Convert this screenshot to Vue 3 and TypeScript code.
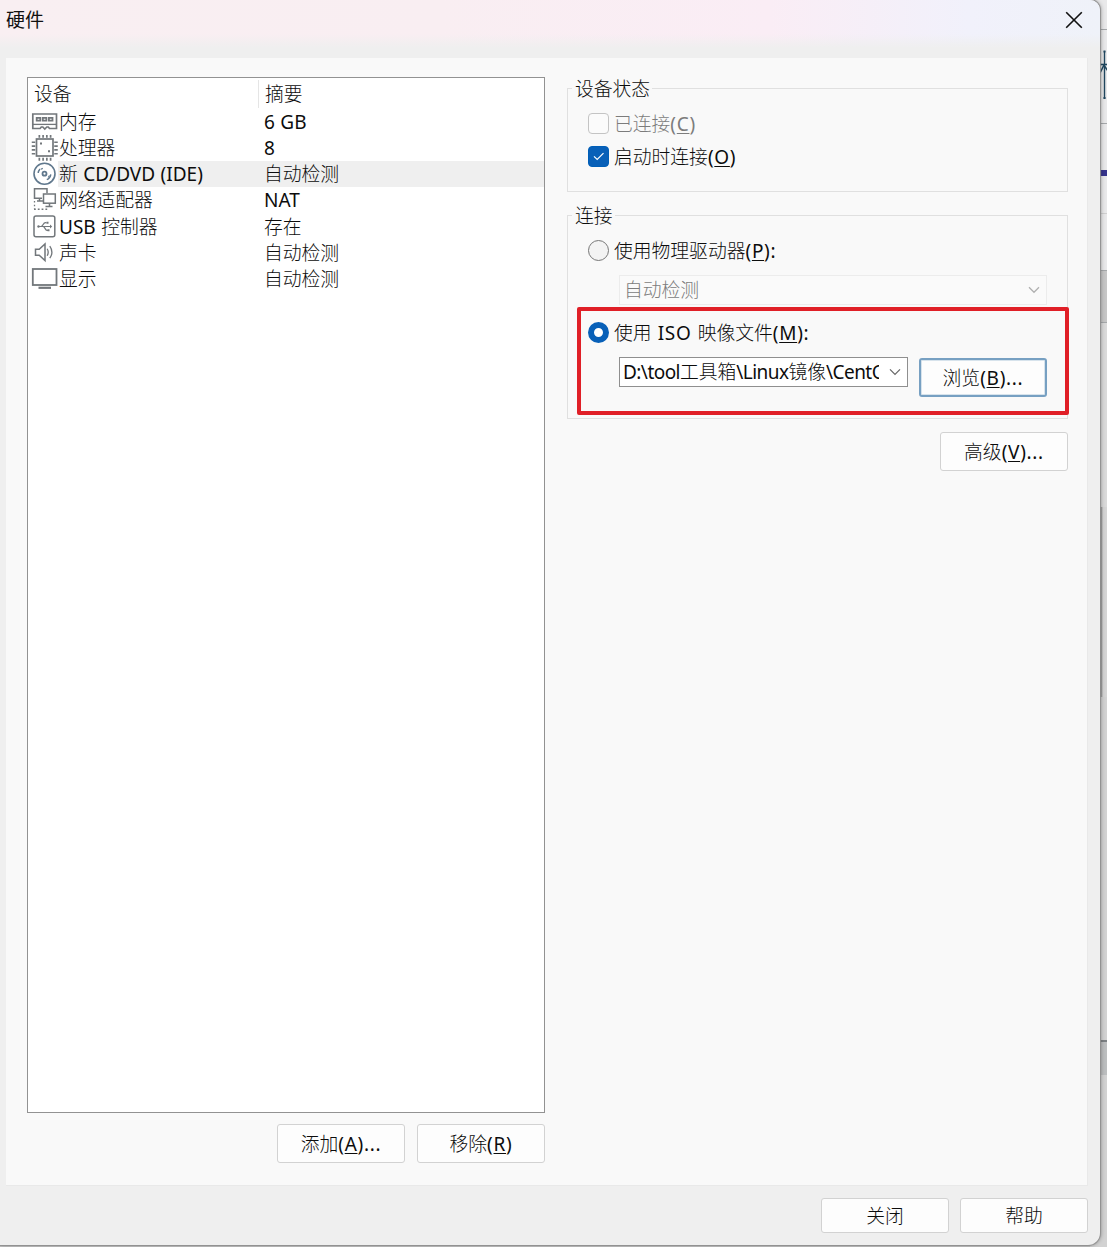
<script setup lang="ts">
import { ref, h, type FunctionalComponent } from 'vue'

interface Device {
  icon: string
  name: string
  summary: string
}

const devices: Device[] = [
  { icon: 'memory', name: '内存', summary: '6 GB' },
  { icon: 'cpu', name: '处理器', summary: '8' },
  { icon: 'disc', name: '新 CD/DVD (IDE)', summary: '自动检测' },
  { icon: 'network', name: '网络适配器', summary: 'NAT' },
  { icon: 'usb', name: 'USB 控制器', summary: '存在' },
  { icon: 'sound', name: '声卡', summary: '自动检测' },
  { icon: 'display', name: '显示', summary: '自动检测' },
]

const selected = ref(2)
const connectAtPowerOn = ref(true)
const source = ref<'physical' | 'iso'>('iso')

// Splits a label into Chinese and Latin runs; "&" marks the accelerator key.
const Label: FunctionalComponent<{ text: string }> = (props) =>
  h(
    'span',
    { class: ['label', { keyed: props.text.includes('&') }] },
    (props.text.match(/&.|[\u4e00-\u9fff]+|[^&\u4e00-\u9fff]+/g) ?? []).map((run) =>
      run[0] === '&'
        ? h('u', run[1])
        : h('span', { class: /[\u4e00-\u9fff]/.test(run) ? 'han' : 'latin' }, run),
    ),
  )
Label.props = ['text']
</script>

<template>
  <div class="desktop">
    <div class="backdrop">
      <i style="height: 29px" class="pale"></i>
      <i style="height: 94px" class="pale line"></i>
      <i style="height: 47px" class="pale line"></i>
      <i style="height: 6px" class="violet"></i>
      <i style="height: 37px" class="pale"></i>
      <i style="height: 57px" class="pale line soft"></i>
      <i style="height: 52px" class="dark line"></i>
      <i style="height: 185px" class="mid line"></i>
      <i style="height: 190px" class="mid edge"></i>
      <i style="height: 343px" class="low"></i>
      <i style="height: 35px" class="thumb"></i>
      <i class="low rest"></i>
      <svg class="mark" width="8" height="50" viewBox="0 0 8 50" fill="none" stroke="#20475f">
        <path d="M4.5 1v48" stroke-width="1.4" />
        <path d="M0 14.5h8" stroke-width="1.6" />
        <path d="M4 15 0 23M4.5 16l3.5 5" stroke-width="1.6" />
        <path d="M3.5 1.500h2M3.500 48h2" stroke-width="2" />
      </svg>
    </div>

    <div class="window">
      <header class="titlebar">
        <span>硬件</span>
        <svg class="close" width="18" height="18" viewBox="0 0 18 18" fill="none" stroke="#111" stroke-width="1.6">
          <path d="M1.200 1.200 16.800 16.800M16.800 1.200 1.200 16.800" />
        </svg>
      </header>

      <main class="panel">
        <section class="left">
          <div class="table">
            <div class="row head">
              <div class="c1"><Label text="设备" /></div>
              <div class="c2"><Label text="摘要" /></div>
            </div>
            <div
              v-for="(d, i) in devices"
              :key="d.icon"
              class="row"
              :class="{ selected: i === selected }"
              @click="selected = i"
            >
              <div class="icon">
                <svg width="28" height="28" viewBox="0 0 28 28" fill="none" stroke="#72777b" stroke-width="1.5">
                  <g v-if="d.icon === 'memory'" transform="translate(0 -.8)">
                    <path d="M1.800 5.800h23.700v14.500h-7l-1.200-1.500h-1.500l-2 2-2-2h-1.500l-1.200 1.500h-7.300z" stroke-width="1.700" />
                    <path d="M2 16.200h23.500" stroke-width="1.3" />
                    <path d="M5.700 9.700h3.600v2.800h-3.600zM11.800 9.700h3.600v2.800h-3.600zM17.900 9.700h3.600v2.800h-3.600z" stroke-width="1.8" />
                  </g>
                  <g v-else-if="d.icon === 'cpu'" transform="translate(0 -1)">
                    <rect x="5.500" y="5" width="16.500" height="17" stroke-width="1.7" />
                    <path d="M7.500 2.200h13M7.500 25.200h13" stroke-width="3" stroke-dasharray="1.7 2.050" />
                    <path d="M2.500 7.500v13M25 7.500v13" stroke-width="3.500" stroke-dasharray="1.600 2.200" />
                    <path d="M9 9.500h2M17 17.300h2" stroke-width="2" />
                  </g>
                  <template v-else-if="d.icon === 'disc'">
                    <g stroke="#60788d">
                      <circle cx="13.500" cy="12.700" r="10.500" stroke-width="1.600" />
                      <circle cx="13.500" cy="12.700" r="2" stroke-width="1.800" />
                      <path d="M7.200 12a6.500 6.500 0 0 1 1.800-4M19.800 13.400a6.500 6.500 0 0 1-4 5.300" stroke-width="1.400" />
                      <path d="M9.800 8.200l2-.8M17.200 16.500l1.300-2" stroke-width="1.200" />
                    </g>
                  </template>
                  <template v-else-if="d.icon === 'network'">
                    <path d="M11 11.300h-7.500v-9.500h12.500v4.500" />
                    <rect x="12.500" y="7" width="11.800" height="9.200" />
                    <path d="M8.500 11.500v2.500M6 14h6M18.500 16.500v3M14.500 19.500h7" />
                    <path d="M3.500 14v8" stroke-dasharray="1.500 2.200" stroke-width="1.300" />
                    <path d="M3 22.300h15" stroke-dasharray="1.800 2" stroke-width="1.600" />
                  </template>
                  <template v-else-if="d.icon === 'usb'">
                    <rect x="3" y="2" width="20.800" height="20.800" rx="2" />
                    <path d="M7 12.500h13M10 12.500c2 0 2-3.800 4.500-3.800h1M12 12.500c2 0 2 3.800 4 3.800h1" stroke-width="1.200" />
                    <circle cx="7.500" cy="12.500" r="1.200" fill="#72777b" stroke="none" />
                    <path d="M15.500 8.700h2M16.500 16.300h2" stroke-width="2" />
                    <path d="m19 10.500 2.200 2-2.200 2z" fill="#72777b" stroke="none" />
                  </template>
                  <g v-else-if="d.icon === 'sound'" transform="translate(0 -.6)">
                    <path d="M4.500 9.800h3.700l5.800-5.200v16.500l-5.800-5.300h-3.700z" />
                    <path d="M16.200 9.300q2 3.500 0 7M18.800 6.800q4.200 6 0 12" stroke-width="1.300" />
                  </g>
                  <g v-else transform="translate(0 .8)">
                    <rect x="1.800" y="2.200" width="23.700" height="16" stroke-width="1.800" />
                    <path d="M7.500 21h12.500" stroke-width="2.200" />
                  </g>
                </svg>
              </div>
              <div class="name"><Label :text="d.name" /></div>
              <div class="c2"><Label :text="d.summary" /></div>
            </div>
          </div>
          <div class="actions">
            <button class="btn"><Label text="添加(&A)..." /></button>
            <button class="btn"><Label text="移除(&R)" /></button>
          </div>
        </section>

        <section class="right">
          <div class="group status">
            <div class="legend"><Label text="设备状态" /></div>
            <div class="option disabled">
              <span class="check"></span>
              <Label text="已连接(&C)" />
            </div>
            <div class="option" @click="connectAtPowerOn = !connectAtPowerOn">
              <span class="check" :class="{ on: connectAtPowerOn }">
                <svg v-if="connectAtPowerOn" width="12" height="9" viewBox="0 0 12 9" fill="none" stroke="#fff" stroke-width="1.200">
                  <path d="m1 4.300 3.200 3.200 6.300-6.300" />
                </svg>
              </span>
              <Label text="启动时连接(&O)" />
            </div>
          </div>

          <div class="group connection">
            <div class="legend"><Label text="连接" /></div>
            <div class="option physical" @click="source = 'physical'">
              <span class="radio" :class="{ on: source === 'physical' }"></span>
              <Label text="使用物理驱动器(&P):" />
            </div>
            <div class="combo off">
              <Label text="自动检测" />
              <svg width="12" height="8" viewBox="0 0 12 8" fill="none" stroke="#b0b0b0" stroke-width="1.300">
                <path d="m1 1.300 5 5 5-5" />
              </svg>
            </div>
            <div class="option iso" @click="source = 'iso'">
              <span class="radio" :class="{ on: source === 'iso' }"></span>
              <Label text="使用 ISO 映像文件(&M):" />
            </div>
            <div class="file">
              <div class="combo">
                <div class="path"><Label text="D:\tool工具箱\Linux镜像\CentOS" /></div>
                <svg width="12" height="8" viewBox="0 0 12 8" fill="none" stroke="#666" stroke-width="1.200">
                  <path d="m1 1.300 5 5 5-5" />
                </svg>
              </div>
              <button class="btn focus"><Label text="浏览(&B)..." /></button>
            </div>
            <div class="highlight"></div>
          </div>

          <button class="btn advanced"><Label text="高级(&V)..." /></button>
        </section>
      </main>

      <footer class="footer">
        <button class="btn"><Label text="关闭" /></button>
        <button class="btn"><Label text="帮助" /></button>
      </footer>
    </div>
  </div>
</template>

<style>
body {
  background: #d2d2d2;
  overflow: hidden;
}
.label {
  white-space: pre;
  word-spacing: 0.5px;
}
.label .han {
  font-family: 'Noto Sans CJK SC', sans-serif;
  font-weight: 300;
  font-size: 18.8px;
  line-height: 0;
}
.label.keyed {
  letter-spacing: 0.7px;
}
.label.keyed .han {
  letter-spacing: 0;
}
.label u {
  text-decoration-thickness: 1px;
  text-underline-offset: 2px;
}
.path .latin {
  letter-spacing: -0.55px;
}
</style>

<style scoped>
* {
  box-sizing: border-box;
}
.desktop {
  position: relative;
  width: 1107px;
  height: 1247px;
  overflow: hidden;
  background: #c4c4c4;
  color: #0c0c0c;
  font-family: 'Noto Sans', 'Noto Sans CJK SC', sans-serif;
  font-size: 19px;
  line-height: 26px;
}
.backdrop {
  position: absolute;
  top: 0;
  right: 0;
  width: 17px;
  height: 1247px;
  display: flex;
  flex-direction: column;
}
.backdrop i {
  display: block;
  flex: none;
}
.backdrop .pale { background: #e9e9ea; }
.backdrop .line { border-top: 1px solid #a5a8aa; }
.backdrop .soft { border-top-color: #d0d0d0; }
.backdrop .violet { background: #36348c; }
.backdrop .dark { background: #c6c6c6; }
.backdrop .mid { background: #dadada; }
.backdrop .edge { background: linear-gradient(90deg, #8f8f8f 11px, #d5d5d5 13px); }
.backdrop .low { background: #d2d2d2; }
.backdrop .thumb { background: #bcbebf; border-top: 2px solid #7d8184; }
.backdrop .rest { flex: 1; }
.mark {
  position: absolute;
  right: -1px;
  top: 50px;
}
.window {
  position: relative;
  display: flex;
  flex-direction: column;
  width: 1100px;
  height: 1245px;
  background: #efefef;
  border-radius: 0 10px 12px 0;
  box-shadow: 0 0 1px 1px #909090, 1px 0 4px rgba(0, 0, 0, 0.3);
}
.titlebar {
  display: flex;
  justify-content: space-between;
  align-items: flex-start;
  height: 58px;
  padding: 6px 17px 0 6px;
  border-radius: 0 10px 0 0;
  background:
    linear-gradient(180deg, rgba(239, 239, 239, 0) 34px, #efefef 48px),
    linear-gradient(90deg, #f9eff2 0%, #f9eef2 40%, #faedf5 70%, #f1f1fb 88%, #eff2f9 100%);
  font-family: 'Noto Sans CJK SC', sans-serif;
  color: #111;
}
.titlebar .close {
  margin-top: 5px;
}
.panel {
  display: flex;
  width: 1082px;
  height: 1128px;
  margin-left: 6px;
  padding: 19px 19px 0 21px;
  background: #f9f9f9;
  border-right: 1px solid #e9e9e9;
  border-bottom: 1px solid #e9e9e9;
}
.left {
  flex: none;
  width: 518px;
  margin-right: 22px;
}
.table {
  height: 1036px;
  background: #fff;
  border: 1px solid #929292;
}
.row {
  display: flex;
  height: 26.3px;
}
.row.head {
  height: 30.5px;
  padding-top: 3px;
}
.c1 {
  width: 230px;
  padding-left: 6px;
}
.head .c2 {
  height: 28px;
  margin-top: -1px;
  padding-top: 1px;
  padding-left: 6px;
  border-left: 1px solid #e5e5e5;
}
.icon {
  flex: none;
  width: 30px;
  padding-left: 3px;
}
.icon svg {
  display: block;
}
.name {
  width: 206px;
  padding-left: 1px;
}
.row .c2 {
  flex: 1;
}
.selected .name,
.selected .c2 {
  background: #efefef;
}
.actions {
  display: flex;
  justify-content: flex-end;
  gap: 12px;
  padding-top: 11px;
}
.btn {
  flex: none;
  width: 128px;
  height: 39px;
  padding: 0;
  border: 1px solid #d2d2d2;
  border-radius: 3px;
  background: #fdfdfd;
  color: inherit;
  font: inherit;
  text-align: center;
}
.btn.focus {
  border: 2px solid #77a0c2;
  box-shadow: inset 0 0 0 1px #d7e3ec;
}
.right {
  display: flex;
  flex-direction: column;
  flex: none;
  width: 501px;
}
.group {
  position: relative;
  border: 1px solid #e0e0e0;
}
.legend {
  position: absolute;
  top: -13px;
  left: 4px;
  padding: 0 2px 0 3px;
  background: #f9f9f9;
}
.status {
  height: 104px;
  margin-top: 11px;
  padding: 22px 0 0 20px;
}
.option {
  display: flex;
  align-items: center;
  gap: 6px;
  height: 26px;
}
.status .option {
  margin-bottom: 7px;
}
.disabled {
  color: #7c7c7c;
}
.check {
  display: flex;
  align-items: center;
  justify-content: center;
  width: 21px;
  height: 21px;
  margin: 0 -1px 1px 0;
  border: 1px solid #c4c4c4;
  border-radius: 4px;
  background: #fbfbfb;
}
.check.on {
  border-color: #005fb8;
  background: #0860b8;
}
.radio {
  width: 21px;
  height: 21px;
  margin: 0 -1px 1px 0;
  border: 1px solid #777;
  border-radius: 50%;
  background: #f3f3f3;
}
.radio.on {
  border: 6px solid #0860b8;
  background: #fff;
}
.connection {
  height: 204px;
  margin-top: 23px;
  padding: 22px 0 0 20px;
}
.combo {
  display: flex;
  align-items: center;
  justify-content: space-between;
  width: 289px;
  height: 30px;
  padding: 0 6px 0 3px;
  border: 1px solid #8f8f8f;
  background: #fff;
}
.combo.off {
  width: 428px;
  margin: 11px 0 15px 31px;
  padding-left: 4px;
  border-color: #ececec;
  background: #fafafa;
  color: #7c7c7c;
}
.path {
  width: 256px;
  overflow: hidden;
}
.file {
  display: flex;
  align-items: flex-start;
  gap: 11px;
  margin: 11px 0 0 31px;
}
.file .btn {
  margin-top: 1px;
}
.highlight {
  position: absolute;
  top: 91px;
  left: 9px;
  width: 492px;
  height: 108px;
  border: 4px solid #e01f27;
  border-radius: 2px;
  pointer-events: none;
}
.advanced {
  align-self: flex-end;
  margin-top: 13px;
}
.footer {
  display: flex;
  justify-content: flex-end;
  gap: 11px;
  padding: 12px 12px 0 0;
}
.footer .btn {
  height: 35px;
}
</style>
